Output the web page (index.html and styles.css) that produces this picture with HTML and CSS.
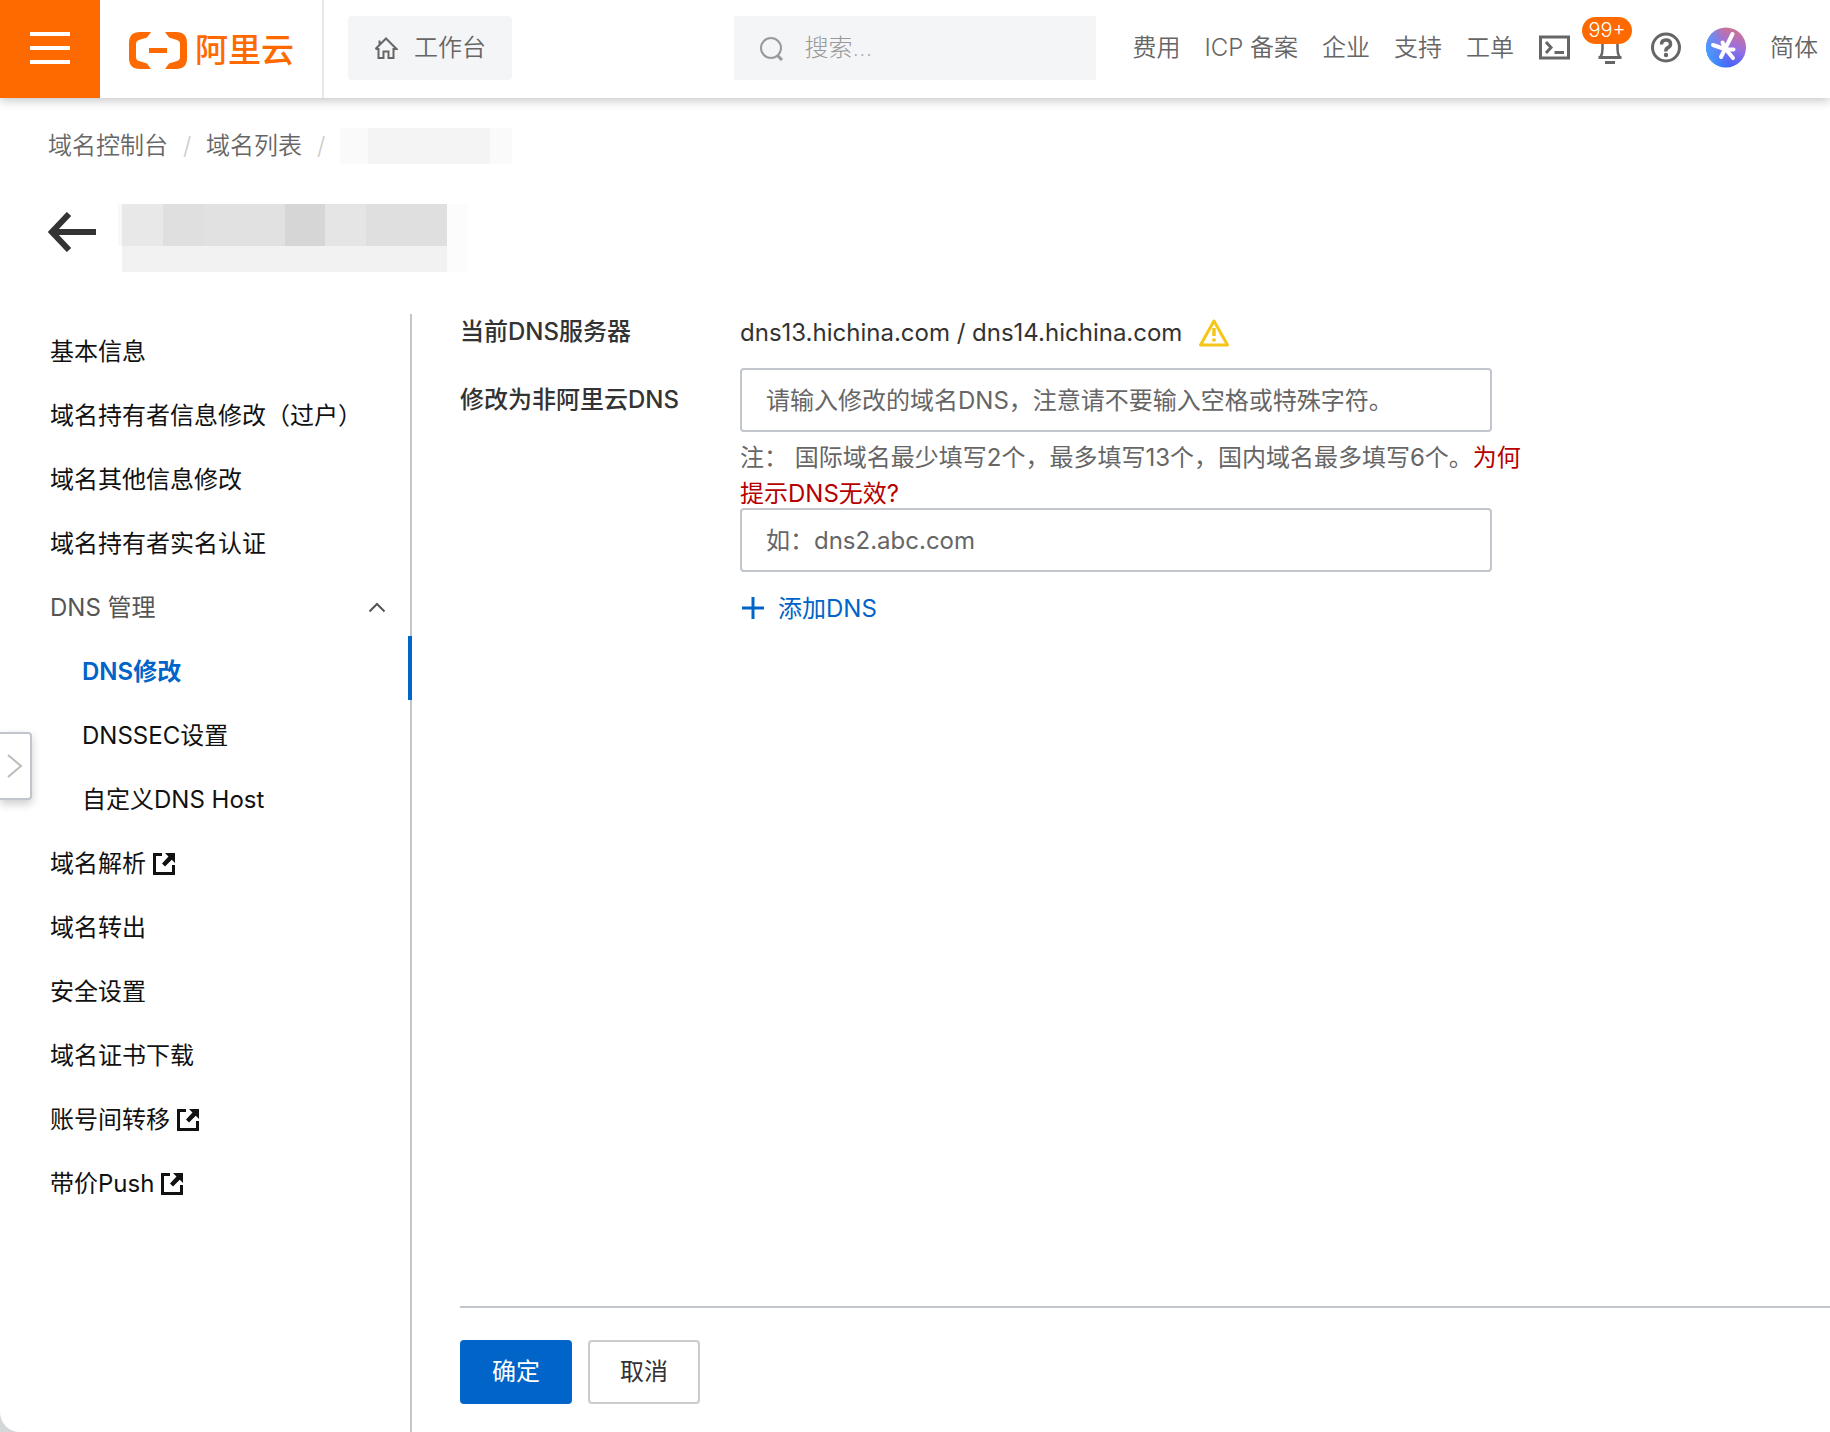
FILE: index.html
```html
<!DOCTYPE html>
<html lang="zh-CN">
<head>
    <meta charset="UTF-8">
    <meta name="viewport" content="width=device-width, initial-scale=1.0">
    <title>DNS修改 - 域名控制台</title>
    <link rel="stylesheet" href="styles.css">
</head>
<body>
    <div class="app">
        <header class="topbar">
            <button class="menu-btn" type="button" aria-label="菜单">
                <span></span><span></span><span></span>
            </button>
            <a class="logo" href="#">
                <svg width="58" height="37" viewBox="0 0 58 37" fill="#ff6a00">
                    <path d="M22 0H11Q0 0 0 11V26Q0 37 11 37H22L18 31.500L10 29Q7 28 7 25V12Q7 9 10 8L18 5.500Z"/>
                    <path d="M36 0H47Q58 0 58 11V26Q58 37 47 37H36L40 31.500L48 29Q51 28 51 25V12Q51 9 48 8L40 5.500Z"/>
                    <rect x="20" y="16" width="18" height="5"/>
                </svg>
                <span>阿里云</span>
            </a>
            <a class="workbench" href="#">
                <svg width="24" height="24" viewBox="0 0 24 24" fill="none" stroke="#666" stroke-width="2">
                    <path d="M1.500 13L12 2.500L22.500 13H19.500V22H14.500V15.500H9.500V22H4.500V13H1.500M5.500 9V4.500"/>
                </svg>
                <span>工作台</span>
            </a>
            <label class="search">
                <svg width="24" height="26" viewBox="0 0 24 26" fill="none" stroke="#999" stroke-width="2">
                    <circle cx="11" cy="13" r="10"/>
                    <path d="M17.500 20.500L22 25" stroke-width="3"/>
                </svg>
                <input type="text" placeholder="搜索..." aria-label="搜索">
            </label>
            <nav class="top-nav">
                <a href="#">费用</a>
                <a href="#">ICP 备案</a>
                <a href="#">企业</a>
                <a href="#">支持</a>
                <a href="#">工单</a>
                <a href="#" aria-label="云命令行">
                    <svg width="32" height="32" viewBox="0 0 32 32" fill="none" stroke="#666" stroke-width="3">
                        <path d="M2.500 5H30.500V26H2.500ZM8 10L13 15.500L8 21M16.500 20.500H26"/>
                    </svg>
                </a>
                <a class="bell" href="#" aria-label="消息">
                    <svg width="32" height="36" viewBox="0 0 32 36" fill="none" stroke="#666">
                        <path d="M6.500 27Q8.500 24 8.500 19V14Q8.500 7 16 7T23.500 14V19Q23.500 24 25.500 27" stroke-width="2.500"/>
                        <path d="M4.500 27.500H27.500M11 32.500H21" stroke-width="3"/>
                    </svg>
                    <span class="badge">99+</span>
                </a>
                <a href="#" aria-label="帮助">
                    <svg width="32" height="32" viewBox="0 0 32 32" fill="none" stroke="#666">
                        <circle cx="16" cy="15.500" r="13.500" stroke-width="3"/>
                        <path d="M11.500 12.500Q11.500 8 16 8T20.500 12Q20.500 14.500 18 15.700T16 19.500" stroke-width="3.500"/>
                        <circle cx="16" cy="23" r="2.200" fill="#666" stroke="none"/>
                    </svg>
                </a>
                <a href="#" aria-label="AI 助理">
                    <svg width="40" height="42" viewBox="0 0 40 42">
                        <defs>
                            <linearGradient id="ai-bg" x1="0.750" y1="0" x2="0.350" y2="1">
                                <stop offset="0" stop-color="#d3738a"/>
                                <stop offset="0.450" stop-color="#9a6fe0"/>
                                <stop offset="1" stop-color="#2f62ff"/>
                            </linearGradient>
                            <linearGradient id="ai-side" x1="0" y1="0.600" x2="0.500" y2="0.500">
                                <stop offset="0" stop-color="#45a5ff" stop-opacity="0.900"/>
                                <stop offset="1" stop-color="#45a5ff" stop-opacity="0"/>
                            </linearGradient>
                        </defs>
                        <circle cx="20" cy="20.500" r="20" fill="url(#ai-bg)"/>
                        <circle cx="20" cy="20.500" r="20" fill="url(#ai-side)"/>
                        <path d="M26.500 7L15 30M7 18L20 22.500L27 31M20 22.500H27.500M16.500 15.500L20 22.500" stroke="#fff" stroke-width="4" stroke-linecap="round" fill="none"/>
                    </svg>
                </a>
                <a href="#">简体</a>
            </nav>
        </header>

        <nav class="breadcrumb">
            <a href="#">域名控制台</a>
            <i>/</i>
            <a href="#">域名列表</a>
            <i>/</i>
            <span class="mask-small"></span>
        </nav>

        <div class="title-row">
            <a class="back" href="#" aria-label="返回">
                <svg width="48" height="40" viewBox="0 0 48 40" fill="none" stroke="#333" stroke-width="6">
                    <path d="M48 20H5M21 2L4 20L21 38"/>
                </svg>
            </a>
            <div class="mask-title"></div>
        </div>

        <div class="body-row">
            <nav class="side-nav">
                <a href="#">基本信息</a>
                <a href="#">域名持有者信息修改（过户）</a>
                <a href="#">域名其他信息修改</a>
                <a href="#">域名持有者实名认证</a>
                <button class="group" type="button">
                    <span>DNS 管理</span>
                    <svg width="18" height="12" viewBox="0 0 18 12" fill="none" stroke="#555" stroke-width="2">
                        <path d="M1.500 9.500L9 2L16.500 9.500"/>
                    </svg>
                </button>
                <a class="sub active" href="#">DNS修改</a>
                <a class="sub" href="#">DNSSEC设置</a>
                <a class="sub" href="#">自定义DNS Host</a>
                <a href="#">域名解析
                    <svg class="ext" viewBox="0 0 22 22"><path d="M0 0H9V3H3V19H19V12H22V22H0ZM12 0H22V10L18.800 6.800L12 13.500L9 10.500L15.500 3.500Z"/></svg>
                </a>
                <a href="#">域名转出</a>
                <a href="#">安全设置</a>
                <a href="#">域名证书下载</a>
                <a href="#">账号间转移
                    <svg class="ext" viewBox="0 0 22 22"><path d="M0 0H9V3H3V19H19V12H22V22H0ZM12 0H22V10L18.800 6.800L12 13.500L9 10.500L15.500 3.500Z"/></svg>
                </a>
                <a href="#">带价Push
                    <svg class="ext" viewBox="0 0 22 22"><path d="M0 0H9V3H3V19H19V12H22V22H0ZM12 0H22V10L18.800 6.800L12 13.500L9 10.500L15.500 3.500Z"/></svg>
                </a>
            </nav>

            <form class="content">
                <div class="fields">
                    <div class="row">
                        <span class="label">当前DNS服务器</span>
                        <div class="current">
                            <span>dns13.hichina.com / dns14.hichina.com</span>
                            <svg width="32" height="30" viewBox="0 0 32 30" fill="none" stroke="#f5c518" stroke-width="3" stroke-linejoin="round">
                                <path d="M16 3L29.500 27H2.500Z"/>
                                <path d="M16 10V18M16 20.500V23.500" stroke-width="3.500"/>
                            </svg>
                        </div>
                    </div>
                    <div class="row">
                        <label class="label label-input" for="dns1">修改为非阿里云DNS</label>
                        <div class="control">
                            <input class="text-input" id="dns1" type="text" placeholder="请输入修改的域名DNS，注意请不要输入空格或特殊字符。">
                            <p class="note">注： 国际域名最少填写2个，最多填写13个，国内域名最多填写6个。<a href="#">为何提示DNS无效?</a></p>
                            <input class="text-input" id="dns2" type="text" placeholder="如：dns2.abc.com" aria-label="DNS 2">
                            <button class="add-btn" type="button">
                                <svg width="24" height="24" viewBox="0 0 24 24" stroke="#0064c8" stroke-width="3">
                                    <path d="M2 11H24M13 0V22"/>
                                </svg>
                                <span>添加DNS</span>
                            </button>
                        </div>
                    </div>
                </div>
                <div class="actions">
                    <button class="btn btn-primary" type="submit">确定</button>
                    <button class="btn" type="button">取消</button>
                </div>
            </form>
        </div>

        <button class="drawer-handle" type="button" aria-label="展开">
            <svg width="16" height="24" viewBox="0 0 16 24" fill="none" stroke="#bbb" stroke-width="2">
                <path d="M1 1L14 12L1 23"/>
            </svg>
        </button>
    </div>
</body>
</html>
```

FILE: styles.css
```css
* {
    box-sizing: border-box;
}

body {
    margin: 0;
    background: #d4d7d8;
    font-family: Inter, "Noto Sans CJK SC", sans-serif;
    font-size: 24px;
    line-height: 36px;
    color: #333;
}

a {
    color: inherit;
    text-decoration: none;
}

button,
input {
    font: inherit;
    color: inherit;
}

button {
    padding: 0;
    border: none;
    background: none;
    cursor: pointer;
}

svg {
    display: block;
    flex: none;
}

.app {
    position: relative;
    display: flex;
    flex-direction: column;
    min-height: 100vh;
    background: #fff;
    border-bottom-left-radius: 20px;
    overflow: hidden;
}

/* Top bar */
.topbar {
    display: flex;
    align-items: center;
    height: 98px;
    padding: 0 12px 2px 0;
    color: #666;
    font-weight: 350;
    box-shadow: 0 2px 10px rgba(0, 0, 0, 0.25);
}

.menu-btn {
    display: flex;
    flex-direction: column;
    justify-content: center;
    align-items: center;
    align-self: flex-start;
    gap: 10px;
    flex: none;
    width: 100px;
    height: 98px;
    padding-bottom: 2px;
    background: #ff6a00;
}

.menu-btn span {
    width: 40px;
    height: 4px;
    background: #fff;
}

.logo {
    display: flex;
    align-items: center;
    align-self: flex-start;
    gap: 8px;
    flex: none;
    width: 224px;
    height: 98px;
    padding: 2px 0 0 29px;
    border-right: 2px solid #e8e8e8;
    color: #ff6a00;
    font-size: 33px;
    font-weight: 500;
    white-space: nowrap;
}

.workbench {
    display: flex;
    align-items: center;
    gap: 16px;
    height: 64px;
    margin-left: 24px;
    padding: 0 26px;
    border-radius: 4px;
    background: #f4f5f7;
    white-space: nowrap;
}

.search {
    display: flex;
    align-items: center;
    gap: 20px;
    width: 362px;
    height: 64px;
    margin: 0 36px 0 auto;
    padding: 0 26px;
    background: #f4f5f7;
}

.search input {
    flex: 1;
    min-width: 0;
    padding: 0;
    border: none;
    outline: none;
    background: none;
    font-weight: 200;
}

.search input::placeholder {
    color: #999;
}

.top-nav {
    display: flex;
    align-items: center;
    gap: 24px;
    white-space: nowrap;
}

.bell {
    position: relative;
}

.badge {
    position: absolute;
    top: -13px;
    left: -12px;
    width: 50px;
    height: 27px;
    border-radius: 14px;
    background: #ff6a00;
    color: #fff;
    font-size: 20px;
    line-height: 27px;
    text-align: center;
}

/* Breadcrumb and title */
.breadcrumb {
    display: flex;
    align-items: center;
    gap: 15px;
    padding: 30px 48px 0;
    color: #666;
    font-weight: 350;
}

.breadcrumb i {
    width: 8px;
    color: #ccc;
    font-style: normal;
}

.mask-small {
    width: 172px;
    height: 36px;
    background: linear-gradient(90deg, #fafafa 28px, #f4f4f4 28px 150px, #fafafa 150px);
}

.title-row {
    display: flex;
    align-items: flex-start;
    gap: 22px;
    padding: 40px 48px 42px;
}

.back {
    padding-top: 8px;
}

.mask-title {
    width: 350px;
    height: 68px;
    background:
        linear-gradient(90deg, #f8f8f8 4px, #e8e8e8 4px 45px, #dfdfdf 45px 86px, #e1e1e1 86px 167px, #d6d6d6 167px 207px, #e5e5e5 207px 248px, #dfdfdf 248px 329px, #fcfcfc 329px) top / 100% 42px no-repeat,
        linear-gradient(90deg, #fff 4px, #f2f2f2 4px 329px, #fcfcfc 329px) bottom / 100% 26px no-repeat;
}

/* Side navigation */
.body-row {
    display: flex;
    flex: 1;
}

.side-nav {
    display: flex;
    flex-direction: column;
    flex: none;
    width: 412px;
    padding-top: 2px;
    border-right: 2px solid #c0c6cc;
    color: #111;
}

.side-nav a,
.group {
    display: flex;
    align-items: center;
    gap: 7px;
    height: 64px;
    padding: 8px 24px 0 50px;
    white-space: nowrap;
}

.side-nav .group {
    justify-content: space-between;
    color: #555;
}

.side-nav .sub {
    padding-left: 82px;
}

.side-nav .active {
    margin-right: -2px;
    border-right: 4px solid #0064c8;
    color: #0064c8;
    font-weight: 600;
}

.ext {
    width: 22px;
    height: 22px;
    fill: #111;
}

/* DNS form */
.content {
    display: flex;
    flex-direction: column;
    flex: 1;
    min-width: 0;
    padding-left: 48px;
}

.fields {
    flex: 1;
}

.row {
    display: flex;
    align-items: flex-start;
}

.label {
    flex: none;
    width: 280px;
    font-weight: 500;
}

.label-input {
    padding-top: 14px;
}

.current {
    display: flex;
    align-items: center;
    gap: 16px;
    height: 38px;
    margin-bottom: 16px;
}

.control {
    flex: 1;
    max-width: 790px;
}

.text-input {
    display: block;
    width: 100%;
    max-width: 752px;
    height: 64px;
    padding: 0 24px;
    border: 2px solid #c0c6cc;
    border-radius: 4px;
    background: #fff;
}

.text-input::placeholder {
    color: #666;
}

.note {
    margin: 8px 0 -4px;
    color: #666;
}

.note a {
    color: #b60000;
}

.add-btn {
    display: flex;
    align-items: center;
    gap: 14px;
    margin-top: 19px;
    color: #0064c8;
}

.actions {
    display: flex;
    gap: 16px;
    padding: 32px 0 28px;
    border-top: 2px solid #c0c6cc;
}

.btn {
    width: 112px;
    height: 64px;
    border: 2px solid #ccc;
    border-radius: 4px;
    background: #fff;
}

.btn-primary {
    border-color: #0064c8;
    background: #0064c8;
    color: #fff;
}

/* Collapsed drawer handle on the window edge */
.drawer-handle {
    position: absolute;
    top: 732px;
    left: 0;
    display: flex;
    align-items: center;
    width: 32px;
    height: 68px;
    padding-left: 7px;
    border: 2px solid #c0c6cc;
    border-left: none;
    border-radius: 0 4px 4px 0;
    background: #fff;
    box-shadow: 0 4px 10px rgba(0, 0, 0, 0.2);
}
```
